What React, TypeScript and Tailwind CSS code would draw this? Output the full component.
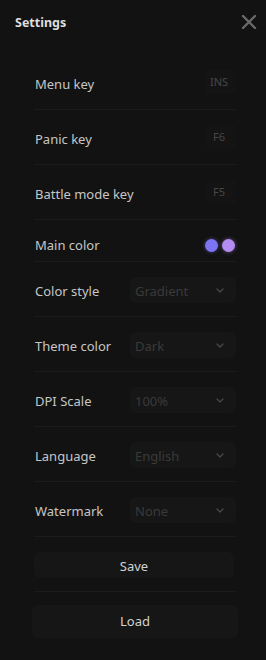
import React from "react";

const font = { fontFamily: '"Noto Sans", "Open Sans", sans-serif' };

function KeyRow({ label, value }: { label: string; value: string }) {
  return (
    <div className="h-[55px] flex items-center justify-between border-b border-[#1b1b1b]">
      <span className="text-[13px] text-[#c6c6c6] pl-[1px] mt-[6px]">{label}</span>
      <div className="w-[30px] h-[24px] -mt-[1px] rounded-[4px] bg-[#141414] flex items-center justify-center text-[11px] text-[#474747] pr-[4px] pt-[2px]">
        {value}
      </div>
    </div>
  );
}

function Chevron() {
  return (
    <svg width="8" height="5" viewBox="0 0 8 5" fill="none" className="mt-[1px]">
      <path d="M1 1L4 4L7 1" stroke="#4a4a4a" strokeWidth="1.2" strokeLinecap="round" strokeLinejoin="round" />
    </svg>
  );
}

function SelectRow({ label, value }: { label: string; value: string }) {
  return (
    <div className="h-[55px] flex items-center justify-between border-b border-[#1b1b1b] pt-[2px]">
      <span className="text-[13px] text-[#c6c6c6] pl-[1px] mt-[4px]">{label}</span>
      <div className="w-[106px] h-[26px] rounded-[6px] bg-[#161616] flex items-center justify-between pl-[5px] pr-[12px]">
        <span className="text-[13px] text-[#3a3a3a] mt-[4px]">{value}</span>
        <Chevron />
      </div>
    </div>
  );
}

export default function App() {
  return (
    <div className="w-[266px] h-[660px] bg-[#121212] overflow-hidden" style={font}>
      <div className="h-[45px] flex items-center justify-between pl-[15px] pr-[9px]">
        <span className="text-[12.5px] font-bold text-[#dedede] mt-[2px]">Settings</span>
        <svg width="16" height="16" viewBox="0 0 16 16" fill="none" className="-mt-[1px]">
          <path d="M2 2L14 14M14 2L2 14" stroke="#6a6a6a" strokeWidth="2.4" strokeLinecap="round" />
        </svg>
      </div>
      <div className="mt-[10px] ml-[34px] w-[202px]">
        <KeyRow label="Menu key" value="INS" />
        <KeyRow label="Panic key" value="F6" />
        <KeyRow label="Battle mode key" value="F5" />
        <div className="h-[42px] flex items-center justify-between border-b border-[#1b1b1b] pt-[9px]">
          <span className="text-[13px] text-[#c6c6c6] pl-[1px] mt-[1px]">Main color</span>
          <div className="flex items-center gap-[4px] pr-[1px]">
            <div className="w-[13px] h-[13px] rounded-full bg-[#7d74f2] shadow-[0_0_4px_rgba(125,116,242,0.5)]" />
            <div className="w-[13px] h-[13px] rounded-full bg-[#b38cf2] shadow-[0_0_4px_rgba(179,140,242,0.5)]" />
          </div>
        </div>
        <SelectRow label="Color style" value="Gradient" />
        <SelectRow label="Theme color" value="Dark" />
        <SelectRow label="DPI Scale" value="100%" />
        <SelectRow label="Language" value="English" />
        <SelectRow label="Watermark" value="None" />
        <div className="h-[55px] flex items-center border-b border-[#1b1b1b]">
          <button className="w-[200px] h-[26px] mt-[1px] pt-[4px] rounded-[6px] bg-[#161616] text-[13px] text-[#d2d2d2]">
            Save
          </button>
        </div>
        <div className="h-[55px] flex items-center -mx-[2px]">
          <button className="w-[206px] h-[33px] mt-[4px] pt-[1px] rounded-[6px] bg-[#161616] text-[13px] text-[#d2d2d2]">
            Load
          </button>
        </div>
      </div>
    </div>
  );
}
